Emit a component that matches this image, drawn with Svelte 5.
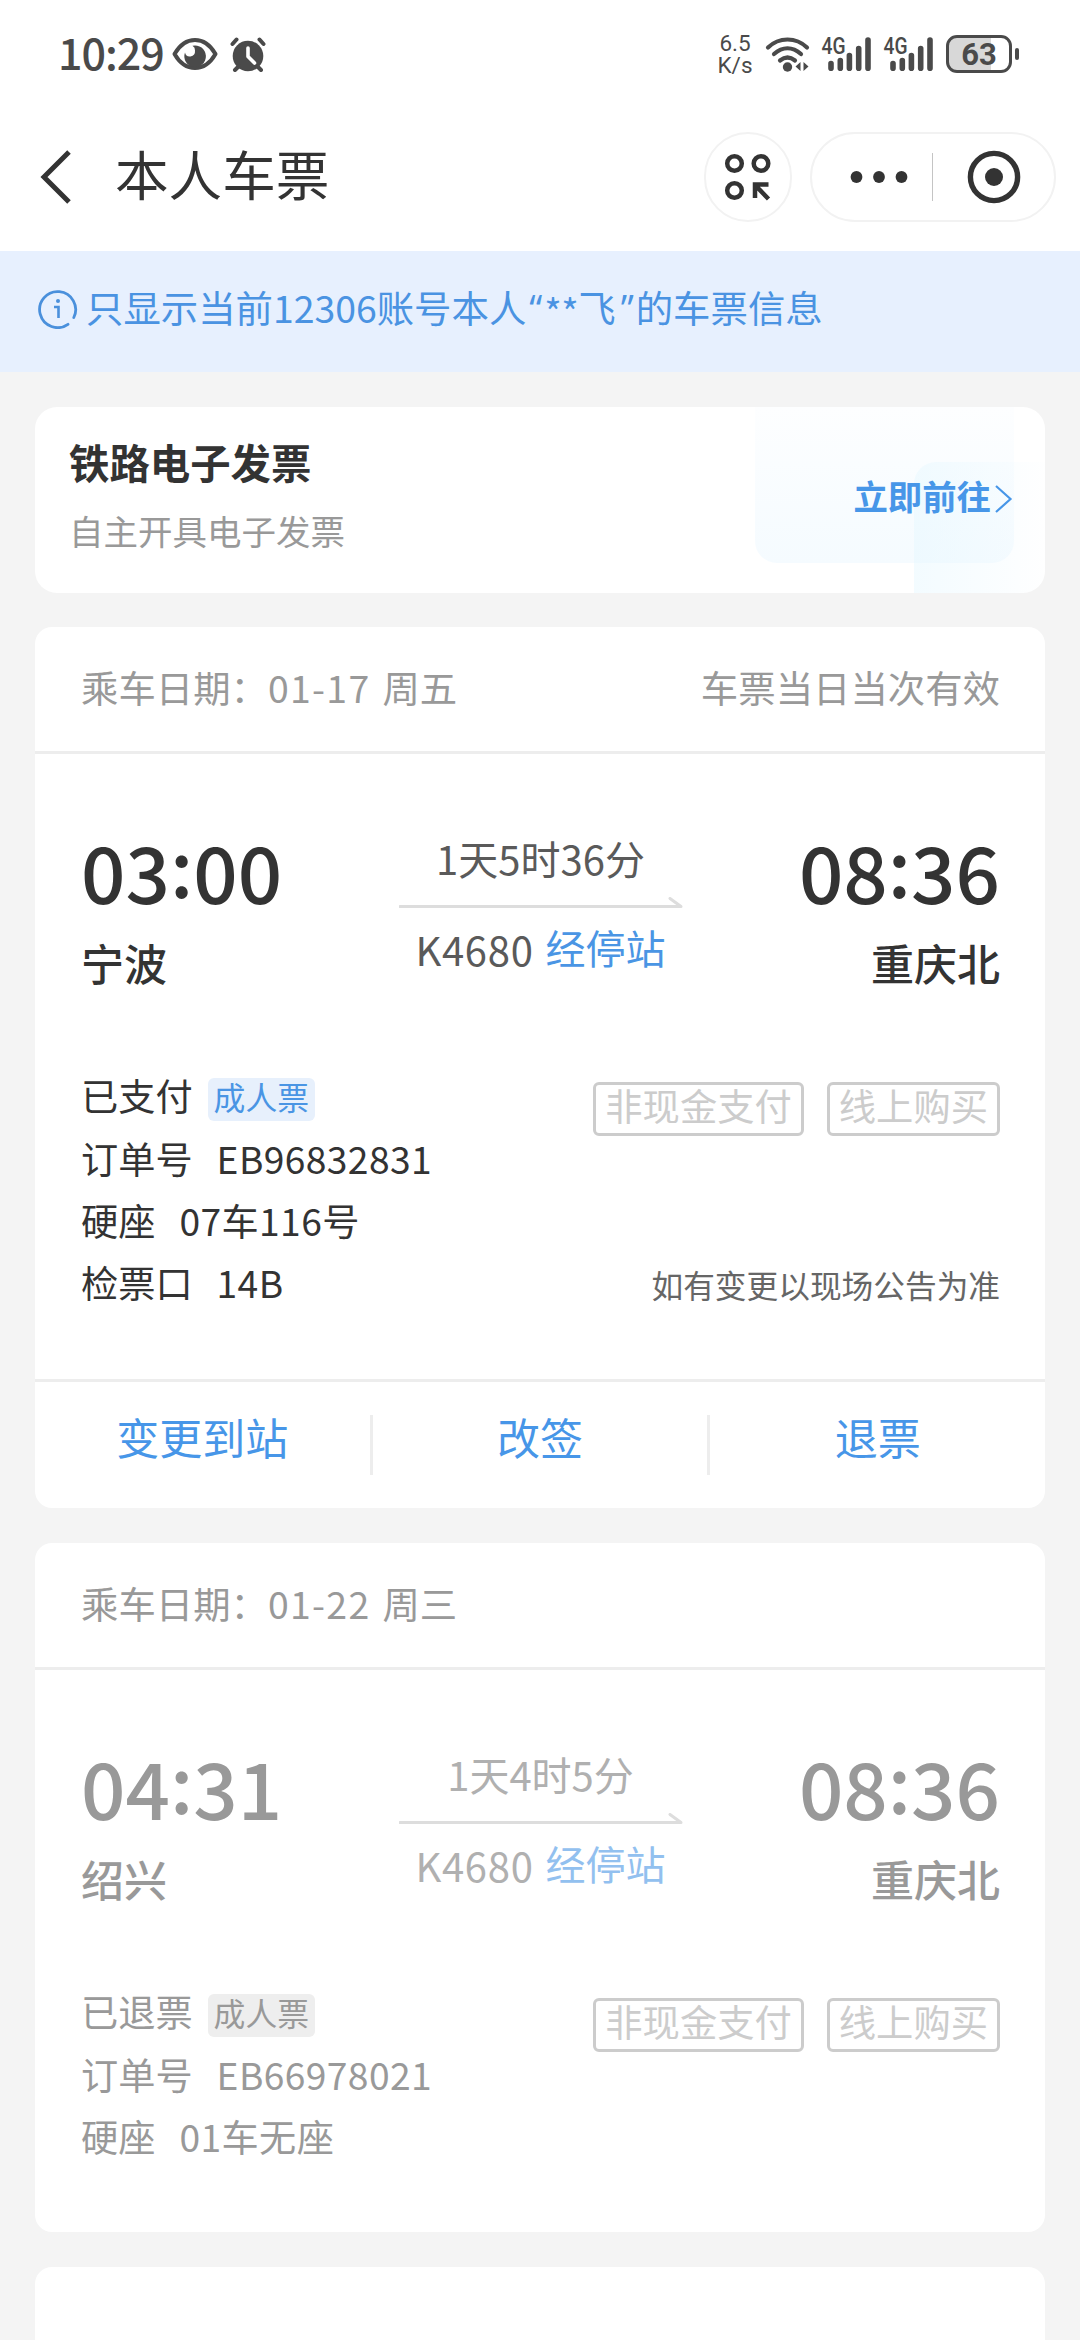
<script>
    let tickets = [
        {
            date: "01-17",
            weekday: "周五",
            note: "车票当日当次有效",
            active: true,
            departTime: "03:00",
            departCity: "宁波",
            arriveTime: "08:36",
            arriveCity: "重庆北",
            duration: "1天5时36分",
            train: "K4680",
            status: "已支付",
            order: "EB96832831",
            seatType: "硬座",
            seat: "07车116号",
            gate: "14B",
            actions: ["变更到站", "改签", "退票"],
        },
        {
            date: "01-22",
            weekday: "周三",
            note: "",
            active: false,
            departTime: "04:31",
            departCity: "绍兴",
            arriveTime: "08:36",
            arriveCity: "重庆北",
            duration: "1天4时5分",
            train: "K4680",
            status: "已退票",
            order: "EB66978021",
            seatType: "硬座",
            seat: "01车无座",
            gate: "",
            actions: [],
        },
    ];
</script>

{#snippet clock(time)}
    <div class="time">
        {time.slice(0, 2)}<span class="colon">:</span>{time.slice(3)}
    </div>
{/snippet}

{#snippet signal()}
    <svg class="signal" width="52" height="44" viewBox="0 -3 52 44">
        <text x="0.500" y="19" textLength="24" lengthAdjust="spacingAndGlyphs">4G</text>
        <g stroke="#4a4a4a" stroke-width="5.600" stroke-linecap="round">
            <path d="M10 28.500v4.700M19.300 25.500v7.700M28.400 20.500v12.700M37.700 13.500v19.700M47 5v28.200" />
        </g>
    </svg>
{/snippet}

<div class="page">
    <div class="status-bar">
        <span class="now">10:29</span>
        <svg class="eye" width="46" height="34" viewBox="0 0 46 34">
            <path
                d="M2.500 17C8 7.500 15 3 23 3s15 4.500 20.500 14C38 26.500 31 31 23 31S8 26.500 2.500 17z"
                fill="none"
                stroke="#4a4a4a"
                stroke-width="4"
                stroke-linejoin="round"
            />
            <path
                d="M20.500 8.800A10.800 10.800 0 1 1 13 15.500a5 5 0 0 0 5.500 4 5.600 5.600 0 0 0 4.500-6 5 5 0 0 0-2.500-4.700z"
                fill="#4a4a4a"
            />
        </svg>
        <svg class="alarm" width="36" height="36" viewBox="0 0 36 36">
            <circle cx="18" cy="20" r="15.300" fill="#4a4a4a" />
            <g fill="none" stroke="#4a4a4a" stroke-width="4" stroke-linecap="round">
                <path d="M2.500 8l4-4.500M33.500 8l-4-4.500M9 30l-4 4M27 30l4 4" />
            </g>
            <path
                d="M18 12v8.500l6.500 6.500"
                fill="none"
                stroke="#fff"
                stroke-width="3.600"
                stroke-linecap="round"
                stroke-linejoin="round"
            />
        </svg>
        <div class="speed"><span>6.5</span><span>K/s</span></div>
        <svg class="wifi" width="46" height="38" viewBox="0 0 46 38">
            <g fill="none" stroke="#4a4a4a" stroke-width="4.200" stroke-linecap="round">
                <path d="M3 12.500C14 1.800 31 1.800 42 12.500" />
                <path d="M9 19C17.500 11.500 27.500 11.500 36 19" />
                <path d="M15 25.500C20 21.500 25 21.500 30 25.500" />
            </g>
            <circle cx="22.500" cy="32" r="4.700" fill="#4a4a4a" />
            <path d="M30.500 31.500l5-4.500v9zM38.500 27v9l5-4.500z" fill="#4a4a4a" />
        </svg>
        {@render signal()}
        {@render signal()}
        <div class="battery">63</div>
        <span class="battery-cap"></span>
    </div>

    <div class="nav">
        <svg class="back" width="34" height="56" viewBox="0 0 34 56">
            <path d="M31 3L6 28l25 25" fill="none" stroke="#333" stroke-width="5" />
        </svg>
        <h1>本人车票</h1>
        <div class="round-btn">
            <svg width="48" height="50" viewBox="0 0 48 50">
                <g fill="none" stroke="#333" stroke-width="4.500">
                    <circle cx="10.500" cy="11.500" r="7.300" />
                    <circle cx="37" cy="11.500" r="7.300" />
                    <circle cx="10.500" cy="38.500" r="7.300" />
                    <path d="M44.500 47L31 33M31 46V32.500h13.500" />
                </g>
            </svg>
        </div>
        <div class="capsule">
            <svg class="dots" width="58" height="14" viewBox="0 0 58 14">
                <circle cx="6.500" cy="7" r="5.900" />
                <circle cx="29" cy="7" r="5.900" />
                <circle cx="51.500" cy="7" r="5.900" />
            </svg>
            <span class="bar"></span>
            <svg width="54" height="54" viewBox="0 0 54 54">
                <circle cx="27" cy="27" r="23.600" fill="none" stroke="#333" stroke-width="5.400" />
                <circle cx="27" cy="27" r="9" fill="#333" />
            </svg>
        </div>
    </div>

    <div class="notice">
        <svg width="40" height="40" viewBox="0 0 40 40">
            <path
                d="M30 35.300A18 18 0 1 1 35.800 28.500"
                fill="none"
                stroke="#4a90dc"
                stroke-width="2.800"
                stroke-linecap="round"
            />
            <path d="M16 18h4.500v11" fill="none" stroke="#4a90dc" stroke-width="2.600" />
            <circle cx="20" cy="12" r="2" fill="#4a90dc" />
        </svg>
        <p>只显示当前12306账号本人<span class="quote">“</span><span class="mask">**</span>飞<span class="quote close">”</span>的车票信息</p>
    </div>

    <div class="list">
        <div class="card invoice">
            <div class="invoice-text">
                <h2>铁路电子发票</h2>
                <p>自主开具电子发票</p>
            </div>
            <div class="go">
                <span>立即前往</span>
                <svg width="20" height="30" viewBox="0 0 20 30">
                    <path d="M2 2l14.500 13L2 28" fill="none" stroke="#4796e8" stroke-width="2.200" />
                </svg>
            </div>
        </div>

        {#each tickets as ticket}
            <div class="card ticket" class:inactive={!ticket.active}>
                <div class="ticket-head">
                    <span>乘车日期：<span class="date">{ticket.date}</span>{ticket.weekday}</span>
                    <span>{ticket.note}</span>
                </div>
                <div class="ticket-body">
                    <div class="route">
                        <div class="stop">
                            {@render clock(ticket.departTime)}
                            <div class="city">{ticket.departCity}</div>
                        </div>
                        <div class="trip">
                            <div class="duration">{ticket.duration}</div>
                            <svg width="284" height="12" viewBox="0 0 284 12">
                                <path
                                    d="M1 9.500h281l-11-8"
                                    fill="none"
                                    stroke="#ddd"
                                    stroke-width="3"
                                    stroke-linecap="round"
                                    stroke-linejoin="round"
                                />
                            </svg>
                            <div class="train"><span class="number">{ticket.train}</span><a href="#stops">经停站</a></div>
                        </div>
                        <div class="stop right">
                            {@render clock(ticket.arriveTime)}
                            <div class="city">{ticket.arriveCity}</div>
                        </div>
                    </div>
                    <div class="details">
                        <div class="rows">
                            <div class="row">{ticket.status}<span class="tag">成人票</span></div>
                            <div class="row">订单号<span class="value">{ticket.order}</span></div>
                            <div class="row">{ticket.seatType}<span class="value">{ticket.seat}</span></div>
                            {#if ticket.gate}
                                <div class="row">检票口<span class="value">{ticket.gate}</span></div>
                            {/if}
                        </div>
                        <div class="side">
                            <div class="labels">
                                <span class="label">非现金支付</span>
                                <span class="label">线上购买</span>
                            </div>
                            {#if ticket.gate}
                                <div class="hint">如有变更以现场公告为准</div>
                            {/if}
                        </div>
                    </div>
                </div>
                {#if ticket.actions.length}
                    <div class="actions">
                        {#each ticket.actions as action}
                            <div class="action"><span>{action}</span></div>
                        {/each}
                    </div>
                {/if}
            </div>
        {/each}

        <div class="card next"></div>
    </div>
</div>

<style>
    :global(body) {
        background-color: #f4f4f4;
    }
    .page {
        height: 2340px;
        overflow: hidden;
        display: flex;
        flex-direction: column;
        background-color: #f4f4f4;
        color: #333;
        font-family: "Noto Sans CJK SC", sans-serif;
    }
    h1,
    h2,
    p {
        margin: 0;
        white-space: nowrap;
    }
    svg {
        display: block;
        flex: none;
    }

    /* Status bar */
    .status-bar {
        box-sizing: border-box;
        height: 103px;
        flex: none;
        display: flex;
        align-items: center;
        padding: 5px 61px 0 58px;
        background-color: #fff;
        color: #4a4a4a;
    }
    .now {
        width: 106px;
        margin-top: -6px;
        font-size: 43px;
        font-weight: 500;
        line-height: 50px;
        letter-spacing: -1px;
    }
    .eye {
        margin-left: 8px;
    }
    .alarm {
        margin-left: 12px;
    }
    .speed {
        display: flex;
        flex-direction: column;
        align-items: center;
        width: 36px;
        margin-left: auto;
        font-family: Roboto, sans-serif;
        font-size: 22.5px;
        line-height: 22px;
    }
    .wifi {
        margin-left: 12px;
    }
    .signal {
        margin-left: 10px;
    }
    .signal text {
        font-family: Roboto, sans-serif;
        font-size: 23px;
        font-weight: 500;
        fill: #4a4a4a;
    }
    .battery {
        box-sizing: border-box;
        width: 66px;
        height: 38px;
        margin-left: 11px;
        border: 3px solid #4a4a4a;
        border-radius: 11px;
        background: linear-gradient(to right, #d8d8d8 70%, #fff 70%);
        font-family: Roboto, sans-serif;
        font-size: 31px;
        font-weight: 700;
        line-height: 33px;
        text-align: center;
    }
    .battery-cap {
        width: 4px;
        height: 12px;
        margin-left: 3px;
        border-radius: 2px;
        background-color: #4a4a4a;
    }

    /* Title bar */
    .nav {
        box-sizing: border-box;
        height: 148px;
        flex: none;
        display: flex;
        align-items: center;
        padding: 0 24px 0 38px;
        background-color: #fff;
    }
    .nav h1 {
        flex: 1;
        margin: -8px 0 0 43px;
        font-size: 53.6px;
        font-weight: 400;
        line-height: 70px;
    }
    .round-btn {
        box-sizing: border-box;
        width: 88px;
        height: 90px;
        display: flex;
        align-items: center;
        justify-content: center;
        border: 2px solid #f2f2f2;
        border-radius: 45px;
    }
    .capsule {
        box-sizing: border-box;
        width: 246px;
        height: 90px;
        margin-left: 18px;
        display: flex;
        align-items: center;
        padding-left: 38px;
        border: 2px solid #f2f2f2;
        border-radius: 45px;
    }
    .dots {
        fill: #333;
    }
    .bar {
        width: 1px;
        height: 48px;
        margin: 0 34px 0 24px;
        background-color: #c4c4c4;
    }

    .notice {
        box-sizing: border-box;
        height: 121px;
        flex: none;
        display: flex;
        align-items: center;
        padding: 0 38px 5px;
        background-color: #e7f0fe;
        color: #4a93e2;
    }
    .notice p {
        margin: -2px 0 0 8px;
        font-size: 37.4px;
        line-height: 50px;
    }
    .quote {
        font-family: "Open Sans", sans-serif;
        margin: 0 2px 0 3px;
    }
    .close {
        margin: 0 2px 0 5px;
    }
    .mask {
        position: relative;
        top: 4px;
        letter-spacing: -0.5px;
    }

    .list {
        display: flex;
        flex-direction: column;
        gap: 35px;
        padding: 35px 35px 0;
    }
    .card {
        flex: none;
        background-color: #fff;
        border-radius: 17px;
    }

    /* Invoice entry */
    .invoice {
        box-sizing: border-box;
        height: 186px;
        margin-bottom: -1px;
        display: flex;
        justify-content: space-between;
        padding: 31px 31px 0 34px;
        border-radius: 22px;
        position: relative;
        overflow: hidden;
    }
    .invoice::before,
    .invoice::after {
        content: "";
        position: absolute;
    }
    .invoice::before {
        top: 0;
        right: 31px;
        width: 259px;
        height: 156px;
        border-radius: 0 0 22px 22px;
        background: linear-gradient(#fdfeff, #f5fbff);
    }
    .invoice::after {
        right: 0;
        bottom: 0;
        width: 131px;
        height: 131px;
        border-radius: 22px 0 0 0;
        background: linear-gradient(to right, rgba(228, 247, 255, 0.45), rgba(248, 252, 255, 0.1));
    }
    .invoice h2 {
        font-size: 40.4px;
        font-weight: 700;
        line-height: 48px;
    }
    .invoice p {
        margin-top: 22px;
        color: #999;
        font-size: 34.5px;
        line-height: 44px;
    }
    .go {
        position: relative;
        z-index: 1;
        height: 120px;
        display: flex;
        align-items: center;
        gap: 3px;
        color: #4796e8;
        font-size: 34.4px;
        font-weight: 700;
    }
    .go span {
        margin-top: -6px;
    }
    .go svg {
        margin-top: 1px;
    }

    /* Ticket */
    .ticket-head {
        box-sizing: border-box;
        height: 127px;
        display: flex;
        justify-content: space-between;
        padding: 0 45px 0 46px;
        border-bottom: 3px solid #ededed;
        color: #999;
        font-size: 37.4px;
        line-height: 121px;
    }
    .date {
        margin-right: 12px;
        letter-spacing: 1.3px;
    }
    .ticket-body {
        box-sizing: border-box;
        height: 625px;
        padding: 70px 45px 0 46px;
    }
    .route {
        display: flex;
        justify-content: space-between;
    }
    .stop {
        width: 300px;
    }
    .right {
        text-align: right;
    }
    .time {
        height: 92px;
        font-size: 78px;
        font-weight: 500;
        line-height: 92px;
    }
    .colon {
        position: relative;
        top: -6px;
    }
    .city {
        font-size: 43px;
        font-weight: 500;
        line-height: 93px;
    }
    .trip {
        width: 284px;
        display: flex;
        flex-direction: column;
        color: #5a5a5a;
        font-size: 40px;
        line-height: 50px;
        text-align: center;
    }
    .duration {
        margin: 9px 0 14px;
    }
    .train {
        display: flex;
        align-items: center;
        justify-content: center;
        margin-top: 13px;
    }
    .number {
        margin-top: 2px;
        letter-spacing: 0.7px;
    }
    .train a {
        margin: -3px 0 0 12px;
        color: #4a95e4;
        text-decoration: none;
    }
    .details {
        display: flex;
        justify-content: space-between;
        margin-top: 55px;
    }
    .row {
        display: flex;
        align-items: center;
        height: 62.4px;
        font-size: 37.2px;
        line-height: 62px;
    }
    .tag {
        height: 43px;
        margin: 9px 0 0 15px;
        padding: 0 6px;
        border-radius: 6px;
        background-color: #e7f0fc;
        color: #4a95e4;
        font-size: 31.8px;
        line-height: 37px;
    }
    .value {
        margin-left: 24px;
        letter-spacing: 0.4px;
    }
    .side {
        display: flex;
        flex-direction: column;
        align-items: flex-end;
    }
    .labels {
        display: flex;
        gap: 23px;
        margin-top: 18px;
    }
    .label {
        box-sizing: border-box;
        height: 54px;
        padding: 0 9px;
        border: 3px solid #ccc;
        border-radius: 6px;
        color: #ccc;
        font-size: 37.3px;
        line-height: 41px;
    }
    .hint {
        margin-top: 126px;
        color: #666;
        font-size: 31.7px;
        line-height: 44px;
    }
    .actions {
        display: flex;
        height: 126px;
        align-items: center;
        border-top: 3px solid #ededed;
    }
    .action {
        flex: 1;
        height: 60px;
        color: #4796e8;
        font-size: 43px;
        line-height: 43px;
        text-align: center;
    }
    .action + .action {
        border-left: 3px solid #ededed;
    }

    .inactive .ticket-body {
        height: 562px;
        color: #999;
    }
    .inactive .trip {
        color: #b0b0b0;
    }
    .inactive .train a {
        color: #92c0ef;
    }
    .inactive .tag {
        background-color: #eee;
        color: #999;
    }
    .next {
        height: 200px;
    }
</style>
